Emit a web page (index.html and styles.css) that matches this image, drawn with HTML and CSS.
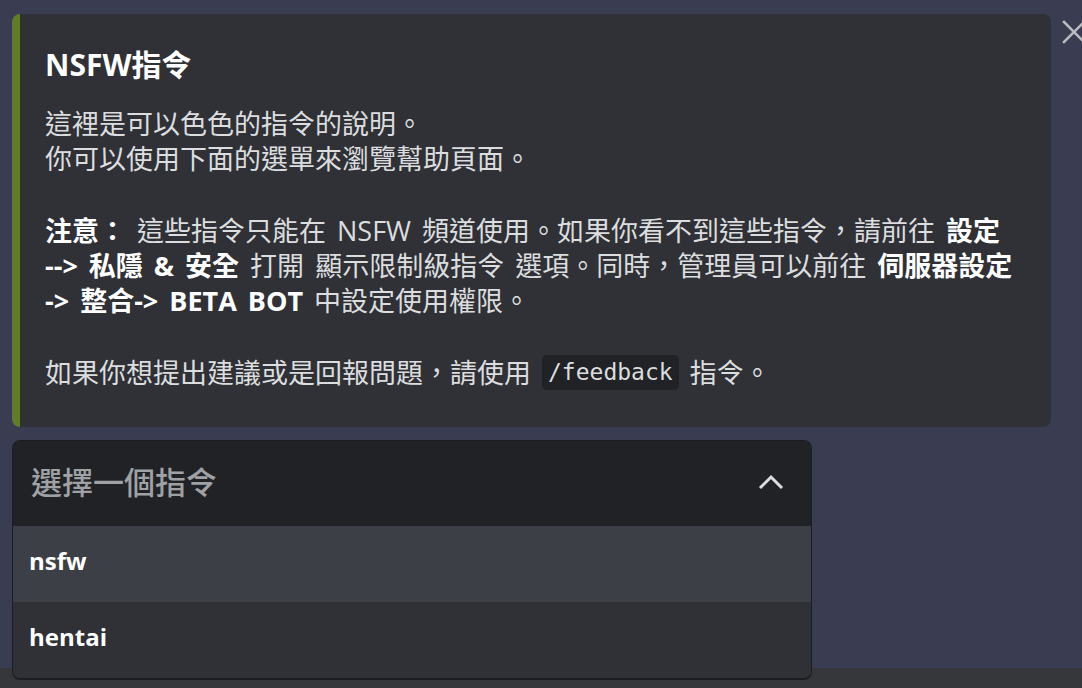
FILE: index.html
```html
<!DOCTYPE html>
<html lang="zh-Hant">
<head>
<meta charset="utf-8">
<title>NSFW指令</title>
<link rel="stylesheet" href="styles.css">
</head>
<body>
<div class="page">
  <div class="top-row">
    <article class="embed">
      <h2 class="embed-title">NSFW指令</h2>
      <div class="embed-desc">
        <p>這裡是可以色色的指令的說明。<br>你可以使用下面的選單來瀏覽幫助頁面。</p>
        <p><strong>注意：</strong> 這些指令只能在 NSFW 頻道使用。如果你看不到這些指令，請前往 <strong>設定</strong><br><strong>--&gt; 私隱 &amp; 安全</strong> 打開 顯示限制級指令 選項。同時，管理員可以前往 <strong>伺服器設定</strong><br><strong>-&gt; 整合-&gt; BETA BOT</strong> 中設定使用權限。</p>
        <p>如果你想提出建議或是回報問題，請使用 <code class="inline-code">/feedback</code> 指令。</p>
      </div>
    </article>
    <button class="close" aria-label="關閉">
      <svg width="26" height="26" viewBox="0 0 26 26"><path d="M3 3 L23 23 M23 3 L3 23" stroke="#b9bbbe" stroke-width="2.6" stroke-linecap="square" fill="none"/></svg>
    </button>
  </div>
  <div class="select">
    <div class="select-head">
      <span class="placeholder">選擇一個指令</span>
      <svg class="chevron" width="26" height="17" viewBox="0 0 26 17"><polyline points="2,14 13,3 24,14" stroke="#dcddde" stroke-width="3" fill="none"/></svg>
    </div>
    <div class="menu">
      <div class="option hovered">nsfw</div>
      <div class="option">hentai</div>
    </div>
  </div>
</div>
</body>
</html>
```

FILE: styles.css
```css
html, body {
  margin: 0;
  padding: 0;
}
body {
  width: 1082px;
  height: 688px;
  overflow: hidden;
  background: linear-gradient(to bottom, #3a3c51 0, #3a3c51 668px, #36373b 668px);
  font-family: "Open Sans", "Noto Sans CJK TC", sans-serif;
  color: #dcddde;
}
.page {
  padding: 14px 0 0 12px;
}
.top-row {
  display: flex;
  align-items: flex-start;
  gap: 10px;
}
.embed {
  box-sizing: border-box;
  flex: 0 0 1039px;
  height: 413px;
  background: #2f3136;
  border-left: 8px solid #5f7d25;
  border-radius: 8px;
  padding: 31px 20px 0 25px;
}
.embed-title {
  margin: 0;
  font-size: 30px;
  line-height: 40px;
  font-weight: 700;
  color: #ffffff;
}
.embed-desc {
  margin-top: 21px;
  font-size: 27px;
  line-height: 35px;
  word-spacing: 4px;
  white-space: nowrap;
}
.embed-desc p {
  margin: 0 0 37px 0;
}
.embed-desc p:last-child {
  margin-bottom: 0;
}
.embed-desc strong {
  font-weight: 700;
  color: #ffffff;
}
.inline-code {
  display: inline-block;
  font-family: "DejaVu Sans Mono", monospace;
  font-size: 23px;
  line-height: 35px;
  word-spacing: 0;
  padding: 0 6px;
  background: #202225;
  border-radius: 5px;
  vertical-align: top;
}
.close {
  flex: 0 0 26px;
  margin-top: 5px;
  padding: 0;
  border: 0;
  background: none;
  width: 26px;
  height: 26px;
}
.select {
  box-sizing: border-box;
  width: 800px;
  margin-top: 13px;
  border: 1px solid #1c1d20;
  border-bottom-width: 2px;
  border-radius: 8px;
  overflow: hidden;
}
.select-head {
  box-sizing: border-box;
  height: 85px;
  background: #202225;
  display: flex;
  align-items: center;
  justify-content: space-between;
  padding: 0 27px 6px 18px;
}
.placeholder {
  font-size: 31px;
  font-weight: 500;
  color: #9fa1a5;
}
.chevron {
  margin-top: 4px;
}
.option {
  box-sizing: border-box;
  height: 76px;
  display: flex;
  align-items: center;
  padding: 0 0 8px 16px;
  font-size: 24px;
  font-weight: 700;
  color: #ffffff;
  background: #2f3136;
}
.option.hovered {
  background: #3c3f45;
}
```
